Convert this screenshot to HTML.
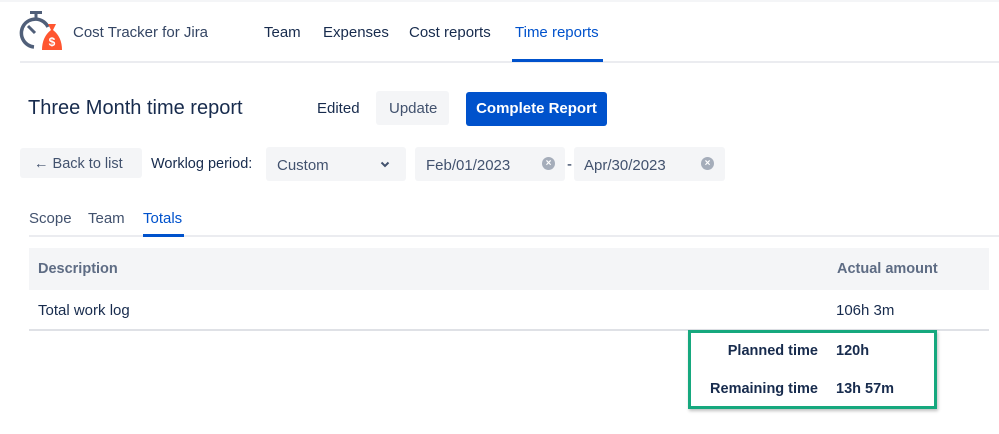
<!DOCTYPE html>
<html><head><style>
*{box-sizing:border-box;margin:0;padding:0}
body{width:999px;height:434px;background:#fff;font-family:"Liberation Sans",sans-serif;color:#172b4d;position:relative;overflow:hidden}
.a{position:absolute;white-space:nowrap}
.box{position:absolute;background:#f4f5f7;border-radius:3px}
.x{position:absolute;width:13px;height:13px;border-radius:50%;background:#a5adba;color:#fff;font-size:10px;line-height:13px;text-align:center;font-weight:bold}
</style></head><body>
<div class="a" style="left:0;top:0;width:999px;height:2px;background:#f4f5f7"></div>
<svg class="a" style="left:18px;top:9px" width="46" height="44" viewBox="0 0 46 44">
<rect x="12" y="2" width="12" height="3" fill="#505f79"/><rect x="16.5" y="4" width="3" height="6" fill="#505f79"/>
<path d="M30 18 A14 14 0 1 0 16 38" fill="none" stroke="#505f79" stroke-width="3.5"/>
<path d="M10 17 L17 24" stroke="#505f79" stroke-width="3"/>
<path d="M30 15 L38 15 L35 21 Q44 28 44 41 L24 41 Q24 28 33 21 Z" fill="#ff5630"/>
<text x="34" y="37" font-size="12" font-weight="bold" fill="#fff" text-anchor="middle" font-family="Liberation Sans">$</text>
</svg>
<div class="a" style="left:73px;top:24px;font-size:15px;color:#344563">Cost Tracker for Jira</div>
<div class="a" style="left:264px;top:24px;font-size:15px">Team</div>
<div class="a" style="left:323px;top:24px;font-size:15px">Expenses</div>
<div class="a" style="left:409px;top:24px;font-size:15px">Cost reports</div>
<div class="a" style="left:515px;top:24px;font-size:15px;color:#0052cc">Time reports</div>
<div class="a" style="left:20px;top:61px;width:979px;height:2px;background:#ebecf0"></div>
<div class="a" style="left:512px;top:59px;width:91px;height:3px;background:#0052cc"></div>

<div class="a" style="left:28px;top:97px;font-size:20px">Three Month time report</div>
<div class="a" style="left:317px;top:100px;font-size:15px">Edited</div>
<div class="box" style="left:376px;top:91px;width:73px;height:34px"></div>
<div class="a" style="left:389px;top:100px;font-size:15px;color:#42526e">Update</div>
<div class="a" style="left:466px;top:92px;width:141px;height:34px;background:#0052cc;border-radius:3px;color:#fff;font-size:15px;font-weight:bold;text-align:center;line-height:34px">Complete Report</div>

<div class="box" style="left:20px;top:148px;width:122px;height:30px"></div>
<div class="a" style="left:34px;top:156px;font-size:14.5px;color:#42526e">← Back to list</div>
<div class="a" style="left:151px;top:156px;font-size:14.5px">Worklog period:</div>
<div class="box" style="left:266px;top:147px;width:140px;height:34px"></div>
<div class="a" style="left:277px;top:157px;font-size:15px;color:#42526e">Custom</div>
<svg class="a" style="left:380px;top:161px" width="10" height="7" viewBox="0 0 10 7"><path d="M1.5 1.5 L5 5 L8.5 1.5" fill="none" stroke="#42526e" stroke-width="2"/></svg>
<div class="box" style="left:415px;top:147px;width:150px;height:34px"></div>
<div class="a" style="left:426px;top:157px;font-size:15px;color:#42526e">Feb/01/2023</div>
<div class="x" style="left:542px;top:157px">×</div>
<div class="a" style="left:567px;top:156px;font-size:15px">-</div>
<div class="box" style="left:574px;top:147px;width:151px;height:34px"></div>
<div class="a" style="left:584px;top:157px;font-size:15px;color:#42526e">Apr/30/2023</div>
<div class="x" style="left:701px;top:157px">×</div>

<div class="a" style="left:29px;top:210px;font-size:15px;color:#42526e">Scope</div>
<div class="a" style="left:88px;top:210px;font-size:15px;color:#42526e">Team</div>
<div class="a" style="left:143px;top:210px;font-size:15px;color:#0052cc">Totals</div>
<div class="a" style="left:29px;top:235px;width:970px;height:2px;background:#ebecf0"></div>
<div class="a" style="left:143px;top:234px;width:41px;height:3px;background:#0052cc"></div>

<div class="a" style="left:29px;top:248px;width:960px;height:42px;background:#f4f5f7"></div>
<div class="a" style="left:38px;top:261px;font-size:14.5px;font-weight:bold;color:#5e6c84">Description</div>
<div class="a" style="left:837px;top:261px;font-size:14.5px;font-weight:bold;color:#5e6c84">Actual amount</div>
<div class="a" style="left:38px;top:302px;font-size:15px">Total work log</div>
<div class="a" style="left:836px;top:302px;font-size:15px">106h 3m</div>
<div class="a" style="left:29px;top:329px;width:960px;height:2px;background:#dfe1e6"></div>

<div class="a" style="left:688px;top:330px;width:249px;height:79px;border:3px solid #16a87e;box-shadow:1px 2px 3px rgba(0,0,0,.25)"></div>
<div class="a" style="left:690px;top:343px;width:128px;text-align:right;font-size:14.5px;font-weight:bold">Planned time</div>
<div class="a" style="left:836px;top:343px;font-size:14.5px;font-weight:bold">120h</div>
<div class="a" style="left:690px;top:381px;width:128px;text-align:right;font-size:14.5px;font-weight:bold">Remaining time</div>
<div class="a" style="left:836px;top:381px;font-size:14.5px;font-weight:bold">13h 57m</div>
</body></html>
